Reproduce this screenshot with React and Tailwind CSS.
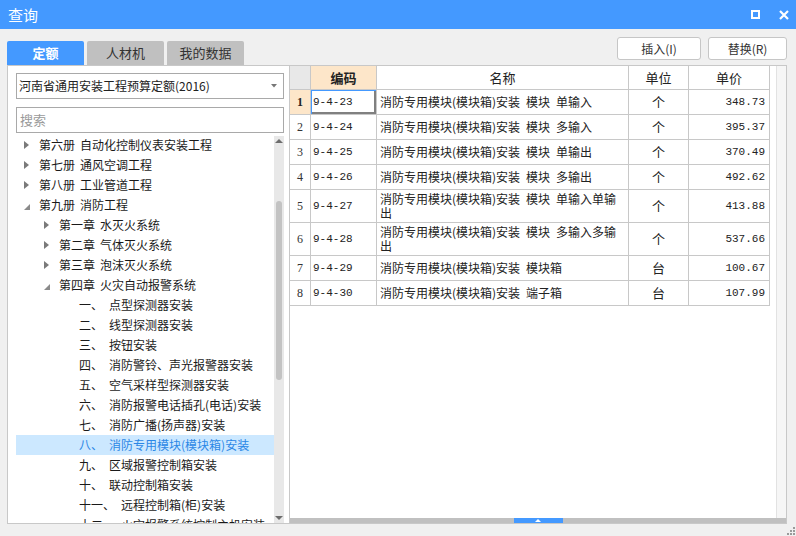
import React from "react";

const tree = [
  { lvl: 1, st: "c", a: "第六册", b: "自动化控制仪表安装工程" },
  { lvl: 1, st: "c", a: "第七册", b: "通风空调工程" },
  { lvl: 1, st: "c", a: "第八册", b: "工业管道工程" },
  { lvl: 1, st: "e", a: "第九册", b: "消防工程" },
  { lvl: 2, st: "c", a: "第一章", b: "水灭火系统" },
  { lvl: 2, st: "c", a: "第二章", b: "气体灭火系统" },
  { lvl: 2, st: "c", a: "第三章", b: "泡沫灭火系统" },
  { lvl: 2, st: "e", a: "第四章", b: "火灾自动报警系统" },
  { lvl: 3, a: "一、", b: "点型探测器安装" },
  { lvl: 3, a: "二、", b: "线型探测器安装" },
  { lvl: 3, a: "三、", b: "按钮安装" },
  { lvl: 3, a: "四、", b: "消防警铃、声光报警器安装" },
  { lvl: 3, a: "五、", b: "空气采样型探测器安装" },
  { lvl: 3, a: "六、", b: "消防报警电话插孔(电话)安装" },
  { lvl: 3, a: "七、", b: "消防广播(扬声器)安装" },
  { lvl: 3, a: "八、", b: "消防专用模块(模块箱)安装", sel: true },
  { lvl: 3, a: "九、", b: "区域报警控制箱安装" },
  { lvl: 3, a: "十、", b: "联动控制箱安装" },
  { lvl: 3, a: "十一、", b: "远程控制箱(柜)安装" },
  { lvl: 3, a: "十二、", b: "火灾报警系统控制主机安装" },
];

const padMap = { 1: "pl-[8px]", 2: "pl-[28px]", 3: "pl-[48px]" };

const P = "消防专用模块(模块箱)安装\u2002";
const rows = [
  ["9-4-23", [P + "模块\u2002单输入"], "个", "348.73"],
  ["9-4-24", [P + "模块\u2002多输入"], "个", "395.37"],
  ["9-4-25", [P + "模块\u2002单输出"], "个", "370.49"],
  ["9-4-26", [P + "模块\u2002多输出"], "个", "492.62"],
  ["9-4-27", [P + "模块\u2002单输入单输", "出"], "个", "413.88"],
  ["9-4-28", [P + "模块\u2002多输入多输", "出"], "个", "537.66"],
  ["9-4-29", [P + "模块箱"], "台", "100.67"],
  ["9-4-30", [P + "端子箱"], "台", "107.99"],
];

function Arrow({ st }) {
  if (st === "c")
    return (
      <svg width="5" height="8" viewBox="0 0 5 8">
        <path d="M0 0L5 4L0 8Z" fill="#7a7a7a" />
      </svg>
    );
  if (st === "e")
    return (
      <svg width="6" height="6" viewBox="0 0 6 6" className="mt-[4px]">
        <path d="M6 0L6 6L0 6Z" fill="#8a8a8a" />
      </svg>
    );
  return null;
}

function TreeRow({ it }) {
  return (
    <div
      className={`flex h-[20px] items-center whitespace-nowrap ${padMap[it.lvl]} ${
        it.sel ? "bg-[#cce8ff] text-[#2b87e6]" : "text-[#1a1a1a]"
      }`}
    >
      <div className="w-[15px] flex items-center">
        <Arrow st={it.st} />
      </div>
      <span>{it.a}</span>
      <span className={it.lvl === 3 ? "ml-[6px]" : "ml-[5px]"}>{it.b}</span>
    </div>
  );
}

export default function App() {
  return (
    <div className="w-[796px] h-[536px] bg-[#f0f0f0] flex flex-col overflow-hidden font-['Noto_Sans_CJK_SC','Noto_Sans',sans-serif] text-[12px] text-[#222]">
      {/* title bar */}
      <div className="h-[29px] shrink-0 bg-[#4499ff] flex items-center pl-[8px] pr-[7px] text-white">
        <span className="text-[15px] leading-none">查询</span>
        <div className="ml-auto flex items-center gap-[19px]">
          <div className="w-[9px] h-[9px] border-2 border-white"></div>
          <svg width="10" height="10" viewBox="0 0 10 10">
            <path d="M1 1L9 9M9 1L1 9" stroke="white" strokeWidth="2.2" />
          </svg>
        </div>
      </div>

      {/* toolbar */}
      <div className="h-[36px] shrink-0 flex pl-[7px] pr-[9px]">
        <div className="flex items-end gap-[3px]">
          <div className="w-[77px] h-[24px] rounded-t-[2px] bg-[#4499ff] text-white font-bold text-[13px] flex items-center justify-center">
            定额
          </div>
          <div className="w-[77px] h-[24px] rounded-t-[2px] bg-[#c0c0c0] text-[#333] text-[13px] flex items-center justify-center">
            人材机
          </div>
          <div className="w-[77px] h-[24px] rounded-t-[2px] bg-[#c0c0c0] text-[#333] text-[13px] flex items-center justify-center">
            我的数据
          </div>
        </div>
        <div className="ml-auto flex gap-[7px] pt-[8px]">
          <button className="w-[84px] h-[23px] bg-white border border-[#c6c6c6] rounded-[3px] text-[12px] text-[#333] flex items-center justify-center">
            插入(I)
          </button>
          <button className="w-[79px] h-[23px] bg-white border border-[#c6c6c6] rounded-[3px] text-[12px] text-[#333] flex items-center justify-center">
            替换(R)
          </button>
        </div>
      </div>

      {/* main */}
      <div className="h-[459px] shrink-0 flex pl-[7px] pr-[9px]">
        {/* left panel */}
        <div className="w-[283px] border border-[#c8c8c8] bg-white flex flex-col pl-[8px] pr-[5px] pt-[7px]">
          <div className="h-[26px] shrink-0 border border-[#a9a9a9] flex items-center pl-[2px] pr-[6px]">
            <span className="whitespace-nowrap">河南省通用安装工程预算定额(2016)</span>
            <svg width="6" height="4" viewBox="0 0 6 4" className="ml-auto">
              <path d="M0 0L6 0L3 3.5Z" fill="#777" />
            </svg>
          </div>
          <div className="h-[26px] shrink-0 mt-[8px] border border-[#a9a9a9] flex items-center pl-[3px] text-[#9a9a9a] text-[13px]">
            搜索
          </div>
          <div className="flex-1 mt-[2px] flex min-h-0">
            <div className="flex-1 overflow-hidden">
              {tree.map((it, i) => (
                <TreeRow key={i} it={it} />
              ))}
            </div>
            <div className="w-[10px] mt-[1px] bg-[#e8e8e8] flex flex-col items-center">
              <div className="h-[10px] flex items-center">
                <svg width="8" height="4" viewBox="0 0 8 4">
                  <path d="M0 4L4 0L8 4Z" fill="#6d6d6d" />
                </svg>
              </div>
              <div className="mt-[55px] w-[6px] h-[179px] rounded-[3px] bg-[#c3c3c3]"></div>
              <div className="mt-auto h-[10px] flex items-center">
                <svg width="8" height="4" viewBox="0 0 8 4">
                  <path d="M0 0L8 0L4 4Z" fill="#6d6d6d" />
                </svg>
              </div>
            </div>
          </div>
        </div>

        {/* right panel */}
        <div className="flex-1 -ml-px border border-[#c8c8c8] bg-white flex flex-col">
          <div className="flex-1 flex min-h-0">
            <div className="w-[480px] flex flex-col">
              {/* header */}
              <div className="h-[24px] flex border-b border-[#c8c8c8] text-[13px]">
                <div className="w-[21px] bg-[#e8e8e8] border-r border-[#c8c8c8]"></div>
                <div className="w-[66px] bg-[#fde6c9] border-r border-[#c8c8c8] flex items-center justify-center font-bold">
                  编码
                </div>
                <div className="w-[252px] border-r border-[#c8c8c8] flex items-center justify-center">名称</div>
                <div className="w-[60px] border-r border-[#c8c8c8] flex items-center justify-center">单位</div>
                <div className="w-[81px] border-r border-[#c8c8c8] flex items-center justify-center">单价</div>
              </div>
              {rows.map((r, i) => {
                const two = r[1].length > 1;
                const first = i === 0;
                return (
                  <div
                    key={i}
                    className={`${two ? "h-[33px]" : "h-[25px]"} flex border-b border-[#c8c8c8]`}
                  >
                    <div
                      className={`w-[21px] border-r border-[#c8c8c8] flex items-center justify-center font-['Liberation_Serif',serif] text-[12px] ${
                        first ? "bg-[#fde6c9] font-bold text-[#222]" : "text-[#333]"
                      }`}
                    >
                      {i + 1}
                    </div>
                    <div
                      className={`w-[66px] border-r border-[#c8c8c8] flex items-center pl-[2px] font-['Liberation_Mono',monospace] text-[11px] ${
                        first ? "shadow-[inset_1px_1px_0_#4499ff,inset_-2px_-2px_0_#808080]" : ""
                      }`}
                    >
                      {r[0]}
                    </div>
                    <div className="w-[252px] border-r border-[#c8c8c8] flex flex-col justify-center pl-[3px] leading-[14px] whitespace-nowrap overflow-hidden">
                      {r[1].map((l, j) => (
                        <div key={j}>{l}</div>
                      ))}
                    </div>
                    <div className="w-[60px] border-r border-[#c8c8c8] flex items-center justify-center text-[13px]">
                      {r[2]}
                    </div>
                    <div className="w-[81px] border-r border-[#c8c8c8] flex items-center justify-end pr-[4px] font-['Liberation_Mono',monospace] text-[11px]">
                      {r[3]}
                    </div>
                  </div>
                );
              })}
            </div>
            <div className="flex-1"></div>
            <div className="w-[10px] bg-[#f6f6f6] border-l border-[#e2e2e2]"></div>
          </div>
          <div className="h-[5px] shrink-0 bg-[#c0c0c0] flex justify-center">
            <div className="w-[49px] h-full bg-[#4499ff] flex items-center justify-center">
              <svg width="6" height="3" viewBox="0 0 6 3">
                <path d="M0 3L3 0L6 3Z" fill="white" />
              </svg>
            </div>
          </div>
        </div>
      </div>

      {/* bottom strip */}
      <div className="flex-1 flex justify-end items-end pr-[1px] pb-[1px]">
        <svg width="10" height="10" viewBox="0 0 10 10">
          <rect x="8" y="2" width="2" height="2" fill="#9a9a9a" />
          <rect x="8" y="5" width="2" height="2" fill="#9a9a9a" />
          <rect x="5" y="5" width="2" height="2" fill="#9a9a9a" />
          <rect x="8" y="8" width="2" height="2" fill="#9a9a9a" />
          <rect x="5" y="8" width="2" height="2" fill="#9a9a9a" />
          <rect x="2" y="8" width="2" height="2" fill="#9a9a9a" />
        </svg>
      </div>
    </div>
  );
}
